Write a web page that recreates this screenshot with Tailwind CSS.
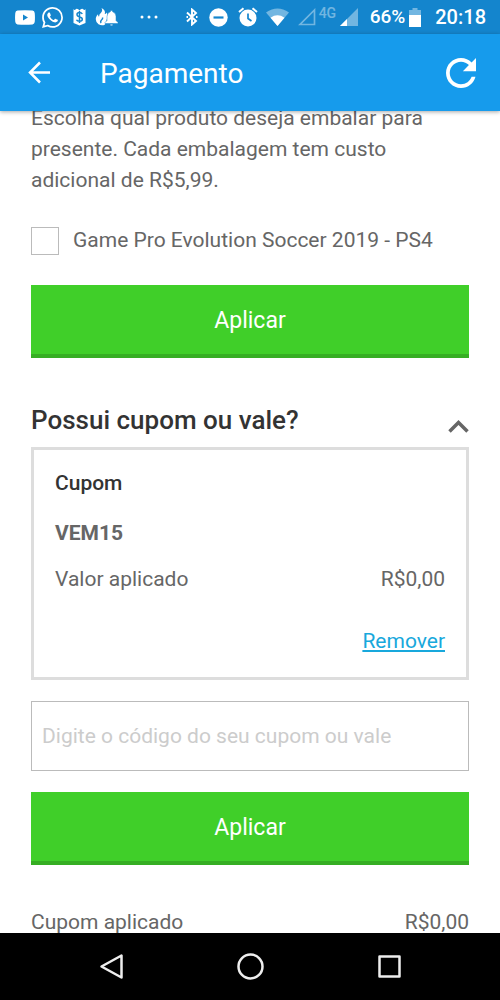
<!DOCTYPE html>
<html lang="pt-BR">
<head>
<meta charset="utf-8">
<meta name="viewport" content="width=device-width, initial-scale=1">
<title>Pagamento</title>
<script src="https://cdn.jsdelivr.net/npm/@tailwindcss/browser@4"></script>
</head>
<body class="flex h-screen flex-col overflow-hidden bg-white font-['Roboto',sans-serif] text-[21px] text-[#666666]">
  <!-- Status bar -->
  <div class="flex h-[34px] shrink-0 items-center justify-between bg-[#1485cd] pr-3.5 pl-[15px] text-white">
    <div class="flex items-center">
      <svg class="h-[15px] w-5" viewBox="0 0 20 15" fill="currentColor" aria-hidden="true"><path fill-rule="evenodd" d="M2.5.6Q10-.2 17.500.6Q19.500 1 19.700 3Q20.200 7.500 19.700 12Q19.500 14 17.500 14.400Q10 15.200 2.500 14.400Q.5 14 .3 12Q-.2 7.500.3 3Q.5 1 2.500.6ZM8 4.500V10.500L13 7.500Z"/></svg>
      <svg class="ml-[7px] size-[21px]" viewBox="0 0 24 24" fill="currentColor" aria-hidden="true"><path d="M17.472 14.382c-.297-.149-1.758-.867-2.030-.967-.273-.099-.471-.148-.67.150-.197.297-.767.966-.94 1.164-.173.199-.347.223-.644.075-.297-.15-1.255-.463-2.390-1.475-.883-.788-1.480-1.761-1.653-2.059-.173-.297-.018-.458.130-.606.134-.133.298-.347.446-.52.149-.174.198-.298.298-.497.099-.198.050-.371-.025-.52-.075-.149-.669-1.612-.916-2.207-.242-.579-.487-.5-.669-.51-.173-.008-.371-.01-.57-.01-.198 0-.52.074-.792.372-.272.297-1.040 1.016-1.040 2.479 0 1.462 1.065 2.875 1.213 3.074.149.198 2.096 3.200 5.077 4.487.709.306 1.262.489 1.694.625.712.227 1.360.195 1.871.118.571-.085 1.758-.719 2.006-1.413.248-.694.248-1.289.173-1.413-.074-.124-.272-.198-.57-.347m-5.421 7.403h-.004a9.870 9.870 0 01-5.031-1.378l-.361-.214-3.741.982.998-3.648-.235-.374a9.860 9.860 0 01-1.510-5.260c.001-5.450 4.436-9.884 9.888-9.884 2.640 0 5.122 1.030 6.988 2.898a9.825 9.825 0 012.893 6.994c-.003 5.450-4.437 9.884-9.885 9.884m8.413-18.297A11.815 11.815 0 0012.050 0C5.495 0 .16 5.335.157 11.892c0 2.096.547 4.142 1.588 5.945L.057 24l6.305-1.654a11.882 11.882 0 005.683 1.448h.005c6.554 0 11.890-5.335 11.893-11.893a11.821 11.821 0 00-3.480-8.413Z"/></svg>
      <svg class="ml-[9px] h-[18px] w-[15px]" viewBox="0 0 15 18" aria-hidden="true"><path fill="#fff" d="M1.500 1Q2.500 3 4 1Q6 .3 7.500 2.500Q9 .3 11 1Q12.500 3 13.500 1V15L7.500 17.500L1.500 15Z"/><path d="M10.300 6Q9.500 4.600 7.500 4.600Q5 4.600 5 6.600Q5 8.400 7.500 8.900Q10.300 9.400 10.300 11.300Q10.300 13.300 7.500 13.300Q5.200 13.300 4.500 11.700M7.500 3V15" fill="none" stroke="#1485cd" stroke-width="1.500"/></svg>
      <svg class="ml-2 h-[18px] w-6" viewBox="0 0 24 18" aria-hidden="true"><path fill="#fff" d="M6.500 0Q11 2.500 9.700 6Q11 6 11.500 4.500Q13 7 12.300 10L10 16.500Q7 18.300 3.500 16.300Q0 13.500 1 9.500Q1.500 7.500 3 6.300Q3 8 4 8.800Q4 6.500 6 4.800Q8 3 6.500 0Z"/><path d="M7.500 9.500Q8 11 6.500 12Q5 13.300 6 15" fill="none" stroke="#1485cd" stroke-width="1.500"/><path d="M16.500 2.500a1.200 1.200 0 0 1 1.200 1.300Q21 4.900 21 8.500V12.500L23 14.500V15.500H10V14.500L12 12.500V8.500Q12 4.900 15.300 3.800A1.200 1.200 0 0 1 16.500 2.500ZM15 16.200H18Q17.800 17.700 16.500 17.700T15 16.200Z" fill="#fff" stroke="#1485cd" stroke-width=".5"/></svg>
      <svg class="ml-[21px] h-1 w-[18px]" viewBox="0 0 18 4" fill="currentColor" aria-hidden="true"><circle cx="2" cy="2" r="1.500"/><circle cx="9" cy="2" r="1.500"/><circle cx="16" cy="2" r="1.500"/></svg>
    </div>
    <div class="flex items-center">
      <svg class="h-[18px] w-3" viewBox="0 0 12 18" fill="none" stroke="currentColor" stroke-width="1.900" aria-hidden="true"><path d="M1 4.500L10 13L6 16.500V1.500L10 5L1 13.500"/><path d="M.5 9H2M10 9H11.500" stroke-width="2"/></svg>
      <svg class="ml-[11px] size-[19px]" viewBox="0 0 19 19" aria-hidden="true"><circle cx="9.500" cy="9.500" r="9.200" fill="#fff"/><path d="M4.500 9.500H14.500" stroke="#1485cd" stroke-width="2.200"/></svg>
      <svg class="ml-2.5 size-5" viewBox="0 0 20 20" aria-hidden="true"><circle cx="10" cy="11" r="8.500" fill="#fff"/><path d="M10 6.500V11.500L13.500 14" fill="none" stroke="#1485cd" stroke-width="1.700"/><path d="M1 5L5.500 1.200M19 5L14.500 1.200" fill="none" stroke="#fff" stroke-width="2"/></svg>
      <svg class="ml-2 h-[18px] w-[23px]" viewBox="0 0 23 18" fill="currentColor" aria-hidden="true"><path opacity=".4" d="M0 4.500Q11.500-3.500 23 4.500L11.500 18Z"/><path d="M4.500 9.700Q11.500 5 18.500 9.700L11.500 18Z"/></svg>
      <svg class="ml-[9px] size-[18px] opacity-40" viewBox="0 0 18 18" fill="none" stroke="currentColor" stroke-width="1.700" aria-hidden="true"><path d="M2 16.500H16.500V2Z"/></svg>
      <span class="ml-[3px] w-[19px] text-sm leading-4 font-medium whitespace-nowrap opacity-40 -translate-y-1">4G</span>
      <svg class="ml-0.5 size-[18px]" viewBox="0 0 18 18" fill="currentColor" aria-hidden="true"><path opacity=".4" d="M0 18H18V0Z"/><path d="M0 18H7V11Z"/></svg>
      <span class="ml-3 text-[19px] font-medium">66%</span>
      <svg class="ml-1 h-[19px] w-3" viewBox="0 0 12 19" fill="currentColor" aria-hidden="true"><path opacity=".4" d="M0 2H3.500V0H8.500V2H12V7H0Z"/><path d="M0 7H12V19H0Z"/></svg>
      <span class="ml-3.5 text-xl font-medium">20:18</span>
    </div>
  </div>

  <!-- App bar -->
  <header class="relative z-10 flex h-[77px] shrink-0 items-center bg-[#169bec] pr-6 pl-7 text-white shadow-[0_1px_4px_rgba(0,0,0,0.35)]">
    <button type="button" aria-label="Voltar"><svg class="size-[23px]" viewBox="0 0 23 23" fill="none" stroke="currentColor" stroke-width="2.500" aria-hidden="true"><path d="M12 1.500L2 11.500L12 21.500M2 11.500H22"/></svg></button>
    <h1 class="ml-[49px] flex-1 pt-0.5 text-[28px]">Pagamento</h1>
    <button type="button" aria-label="Atualizar"><svg class="size-[30px]" viewBox="4 4 16 16" fill="currentColor" aria-hidden="true"><path d="M17.650 6.350C16.200 4.900 14.210 4 12 4c-4.420 0-7.990 3.580-7.990 8s3.570 8 7.990 8c3.730 0 6.840-2.550 7.730-6h-2.080c-.82 2.330-3.040 4-5.650 4-3.310 0-6-2.690-6-6s2.690-6 6-6c1.660 0 3.140.69 4.220 1.780L13 11h7V4l-2.350 2.350z"/></svg></button>
  </header>

  <!-- Scrolled page content -->
  <main class="min-h-0 flex-1 overflow-hidden px-[31px]">
    <p class="-mt-2 max-w-[400px] leading-[31px]">Escolha qual produto deseja embalar para presente. Cada embalagem tem custo adicional de R$5,99.</p>
    <label class="mt-[31px] flex h-7 items-center gap-3.5">
      <input type="checkbox" class="size-7 shrink-0 appearance-none border border-[#bbbbbb] bg-white checked:bg-[#40cf29]">
      <span>Game Pro Evolution Soccer 2019 - PS4</span>
    </label>
    <button type="button" class="mt-[30px] block h-[73px] w-full border-b-4 border-[#36ae23] bg-[#40cf29] pt-1 text-[23px] text-white">Aplicar</button>

    <section>
      <div class="mt-11 flex h-9 items-center justify-between">
        <h2 class="text-[26px] font-medium text-[#333333]">Possui cupom ou vale?</h2>
        <button type="button" aria-label="Recolher" class="self-end"><svg class="h-[18px] w-[21px]" viewBox="0 0 21 18" fill="none" stroke="currentColor" stroke-width="3.500" aria-hidden="true"><path d="M1.500 11.500L10.500 2.500L19.500 11.500"/></svg></button>
      </div>
      <div class="mt-[9px] h-[233px] border-3 border-[#dddddd] px-[21px] pt-[18px] leading-[30px]">
        <h3 class="font-medium text-[#333333]">Cupom</h3>
        <p class="mt-5 font-bold">VEM15</p>
        <div class="mt-4 flex justify-between"><span>Valor aplicado</span><span>R$0,00</span></div>
        <div class="mt-8 text-right"><a href="#" class="text-[#18a8dc] underline">Remover</a></div>
      </div>
      <input type="text" aria-label="Código do cupom ou vale" placeholder="Digite o código do seu cupom ou vale" class="mt-[21px] block h-[70px] w-full border border-[#bbbbbb] px-2.5 outline-none placeholder:text-[#cccccc]">
      <button type="button" class="mt-[21px] block h-[73px] w-full border-b-4 border-[#36ae23] bg-[#40cf29] pt-1 text-[23px] text-white">Aplicar</button>
    </section>
    <div class="mt-[42px] flex justify-between leading-[30px]"><span>Cupom aplicado</span><span>R$0,00</span></div>
  </main>

  <!-- System navigation -->
  <nav class="flex h-[67px] shrink-0 items-center justify-center gap-28 bg-black text-[#eeeeee]">
    <button type="button" aria-label="Voltar"><svg class="size-[27px]" viewBox="0 0 27 27" fill="none" stroke="currentColor" stroke-width="2.500" stroke-linejoin="round" aria-hidden="true"><path d="M23.500 2.500V24.500L3.500 13.500Z"/></svg></button>
    <button type="button" aria-label="Início"><svg class="size-[27px]" viewBox="0 0 27 27" fill="none" stroke="currentColor" stroke-width="2.500" aria-hidden="true"><circle cx="13.500" cy="13.500" r="12"/></svg></button>
    <button type="button" aria-label="Recentes"><svg class="size-[27px]" viewBox="0 0 27 27" fill="none" stroke="currentColor" stroke-width="2.500" stroke-linejoin="round" aria-hidden="true"><path d="M3.500 3.500H23.500V23.500H3.500Z"/></svg></button>
  </nav>
</body>
</html>
